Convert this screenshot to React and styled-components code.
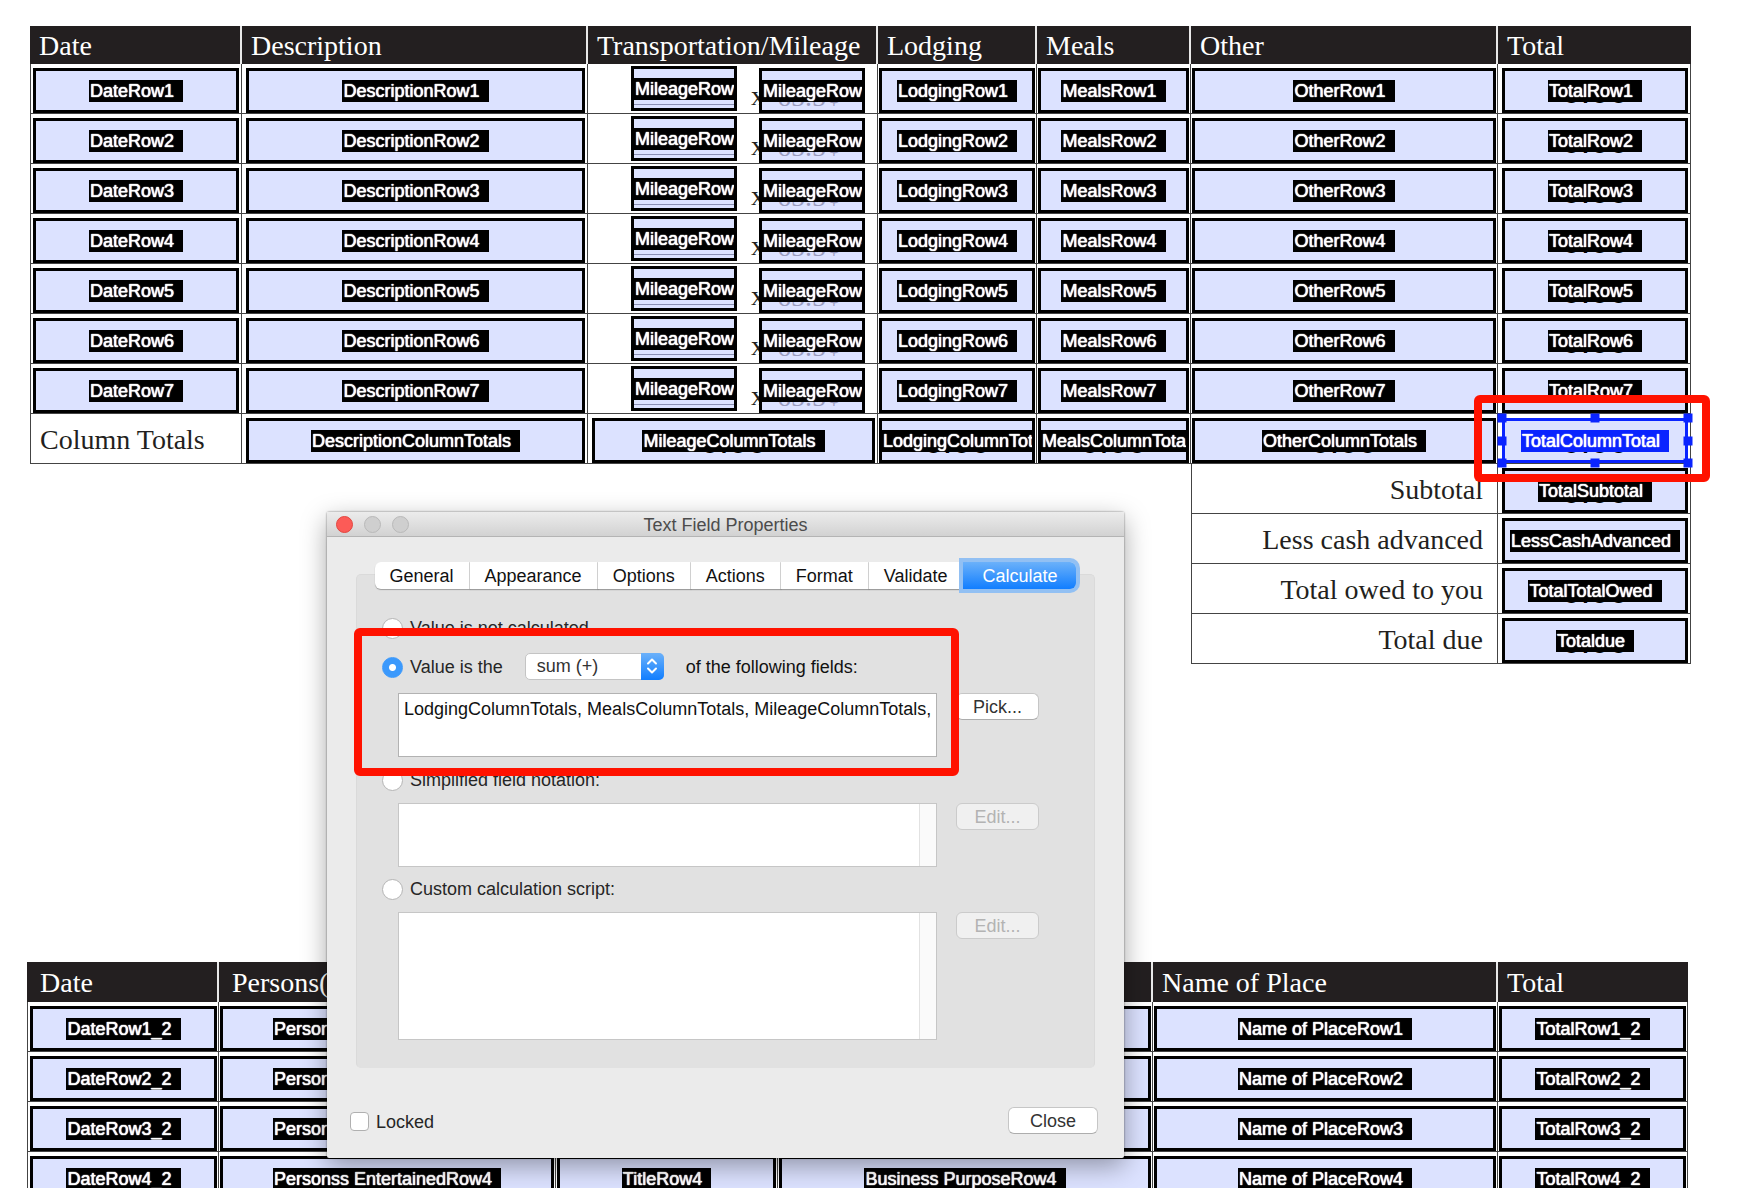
import React, { useState } from "react";
import styled, { createGlobalStyle, css } from "styled-components";

const expenseColumns = [
  { title: "Date", width: 212 },
  { title: "Description", width: 346 },
  { title: "Transportation/Mileage", width: 290 },
  { title: "Lodging", width: 159, tight: true },
  { title: "Meals", width: 154, tight: true },
  { title: "Other", width: 307, tight: true },
  { title: "Total", width: 193 },
];

const guestColumns = [
  { title: "Date", width: 192, indent: true },
  { title: "Persons(s) Entertained", width: 337, indent: true },
  { title: "Title", width: 222 },
  { title: "Business Purpose", width: 375 },
  { title: "Name of Place", width: 345 },
  { title: "Total", width: 190 },
];

const summaryRows = [
  { label: "Subtotal", field: "TotalSubtotal", value: "0.00" },
  { label: "Less cash advanced", field: "LessCashAdvanced" },
  { label: "Total owed to you", field: "TotalTotalOwed", value: "0.00" },
  { label: "Total due", field: "Totaldue", value: "0.00" },
];

const tabs = [
  "General",
  "Appearance",
  "Options",
  "Actions",
  "Format",
  "Validate",
  "Calculate",
];

const handles = [
  ["0%", "0%"],
  ["50%", "0%"],
  ["100%", "0%"],
  ["0%", "50%"],
  ["100%", "50%"],
  ["0%", "100%"],
  ["50%", "100%"],
  ["100%", "100%"],
];

function FormField({ name, value, rate, ruled, selected, onSelect }) {
  const active = selected === name;
  return (
    <FieldWrap>
      <Field
        type="button"
        $active={active}
        $ruled={ruled}
        onClick={() => onSelect(name)}
      >
        {value && <Value>{value}</Value>}
        {rate && <Rate>{rate}</Rate>}
        <FieldName $active={active}>{name}</FieldName>
      </Field>
      {active &&
        handles.map(([x, y]) => <Handle key={x + y} $x={x} $y={y} />)}
      {name === "TotalColumnTotal" && <FieldMark />}
    </FieldWrap>
  );
}

function Columns({ columns }) {
  const total = columns.reduce((sum, c) => sum + c.width, 0);
  return (
    <colgroup>
      {columns.map((c) => (
        <col key={c.title} style={{ width: `${(c.width / total) * 100}%` }} />
      ))}
    </colgroup>
  );
}

function ExpenseTable({ selected, onSelect }) {
  const pick = { selected, onSelect };
  return (
    <Table>
      <Columns columns={expenseColumns} />
      <thead>
        <tr>
          {expenseColumns.map((c) => (
            <Head key={c.title}>{c.title}</Head>
          ))}
        </tr>
      </thead>
      <tbody>
        {[1, 2, 3, 4, 5, 6, 7].map((n) => (
          <tr key={n}>
            {expenseColumns.map((c) =>
              c.title === "Transportation/Mileage" ? (
                <Cell key={c.title}>
                  <MileagePair>
                    <FormField name={`MileageRow${n}`} ruled {...pick} />
                    <Times>x</Times>
                    <FormField
                      name={`MileageRow${n}_2`}
                      rate="65.5¢"
                      {...pick}
                    />
                  </MileagePair>
                </Cell>
              ) : (
                <Cell key={c.title} $tight={c.tight}>
                  <FormField
                    name={`${c.title}Row${n}`}
                    value={c.title === "Total" ? "0.00" : null}
                    {...pick}
                  />
                </Cell>
              )
            )}
          </tr>
        ))}
        <tr>
          <LabelCell scope="row">Column Totals</LabelCell>
          <Cell>
            <FormField name="DescriptionColumnTotals" {...pick} />
          </Cell>
          <Cell>
            <FormField name="MileageColumnTotals" value="0.00" {...pick} />
          </Cell>
          <Cell $tight>
            <FormField name="LodgingColumnTotals" value="0.00" {...pick} />
          </Cell>
          <Cell $tight>
            <FormField name="MealsColumnTotals" value="0.00" {...pick} />
          </Cell>
          <Cell $tight>
            <FormField name="OtherColumnTotals" value="0.00" {...pick} />
          </Cell>
          <Cell>
            <FormField name="TotalColumnTotal" value="0.00" {...pick} />
          </Cell>
        </tr>
        {summaryRows.map((row) => (
          <tr key={row.field}>
            <Spacer colSpan="5" />
            <LabelCell scope="row" $right>
              {row.label}
            </LabelCell>
            <Cell>
              <FormField name={row.field} value={row.value} {...pick} />
            </Cell>
          </tr>
        ))}
      </tbody>
    </Table>
  );
}

function GuestTable({ selected, onSelect }) {
  const pick = { selected, onSelect };
  return (
    <Table>
      <Columns columns={guestColumns} />
      <thead>
        <tr>
          {guestColumns.map((c) => (
            <Head key={c.title} $tall $indent={c.indent}>
              {c.title}
            </Head>
          ))}
        </tr>
      </thead>
      <tbody>
        {[1, 2, 3, 4].map((n) => (
          <tr key={n}>
            {[
              `DateRow${n}_2`,
              `Personss EntertainedRow${n}`,
              `TitleRow${n}`,
              `Business PurposeRow${n}`,
              `Name of PlaceRow${n}`,
              `TotalRow${n}_2`,
            ].map((name) => (
              <Cell key={name} $tight>
                <FormField name={name} {...pick} />
              </Cell>
            ))}
          </tr>
        ))}
      </tbody>
    </Table>
  );
}

function PropertiesDialog() {
  const [tab, setTab] = useState("Calculate");
  const [mode, setMode] = useState("sum");
  const radio = (value) => ({
    type: "radio",
    name: "mode",
    checked: mode === value,
    onChange: () => setMode(value),
  });

  return (
    <Dialog role="dialog" aria-labelledby="dialog-title">
      <TitleBar>
        <Lights>
          <Light aria-label="Close window" $red />
          <Light aria-label="Minimize" disabled />
          <Light aria-label="Zoom" disabled />
        </Lights>
        <Title id="dialog-title">Text Field Properties</Title>
      </TitleBar>
      <Body>
        <TabBar role="tablist">
          {tabs.map((name) => (
            <Tab
              key={name}
              type="button"
              role="tab"
              aria-selected={tab === name}
              $active={tab === name}
              onClick={() => setTab(name)}
            >
              {name}
            </Tab>
          ))}
        </TabBar>
        <Panel>
          <OptionRow>
            <Option>
              <Radio {...radio("none")} />
              Value is not calculated
            </Option>
          </OptionRow>
          <SumGroup>
            <SumRow>
              <Option>
                <Radio {...radio("sum")} />
                Value is the
              </Option>
              <SelectWrap>
                <Select aria-label="Operation" defaultValue="sum">
                  <option value="sum">sum (+)</option>
                  <option value="product">product (x)</option>
                  <option value="average">average</option>
                </Select>
                <SelectCap>
                  <svg width="12" height="18" viewBox="0 0 12 18">
                    <path
                      d="M2 6.5 6 2.5l4 4M2 11.5l4 4 4-4"
                      fill="none"
                      stroke="#fff"
                      strokeWidth="2"
                      strokeLinecap="round"
                      strokeLinejoin="round"
                    />
                  </svg>
                </SelectCap>
              </SelectWrap>
              <Suffix>of the following fields:</Suffix>
            </SumRow>
            <Entry>
              <TextArea
                aria-label="Fields"
                wrap="off"
                $dark
                defaultValue="LodgingColumnTotals, MealsColumnTotals, MileageColumnTotals, OtherColumnTotals"
              />
              <PushButton type="button">Pick...</PushButton>
            </Entry>
            <GroupMark />
          </SumGroup>
          <OptionRow>
            <Option>
              <Radio {...radio("notation")} />
              Simplified field notation:
            </Option>
          </OptionRow>
          <Entry>
            <TextArea aria-label="Simplified field notation" $gutter readOnly />
            <PushButton type="button" disabled>
              Edit...
            </PushButton>
          </Entry>
          <OptionRow>
            <Option>
              <Radio {...radio("script")} />
              Custom calculation script:
            </Option>
          </OptionRow>
          <Entry>
            <TextArea
              aria-label="Custom calculation script"
              $gutter
              $tall
              readOnly
            />
            <PushButton type="button" disabled>
              Edit...
            </PushButton>
          </Entry>
        </Panel>
        <Footer>
          <Option>
            <Checkbox type="checkbox" />
            Locked
          </Option>
          <PushButton type="button" $wide>
            Close
          </PushButton>
        </Footer>
      </Body>
    </Dialog>
  );
}

export default function App() {
  const [selected, setSelected] = useState("TotalColumnTotal");
  return (
    <Page>
      <GlobalStyle />
      <ExpenseSection>
        <ExpenseTable selected={selected} onSelect={setSelected} />
      </ExpenseSection>
      <GuestSection>
        <GuestTable selected={selected} onSelect={setSelected} />
      </GuestSection>
      <PropertiesDialog />
    </Page>
  );
}

const sans = `"Liberation Sans", Arial, sans-serif`;
const serif = `"Liberation Serif", "Times New Roman", serif`;

const GlobalStyle = createGlobalStyle`
  * {
    box-sizing: border-box;
  }
  body {
    margin: 0;
    background: #fff;
    font-family: ${sans};
    font-size: 18px;
  }
  button, select, textarea, input {
    font: inherit;
    margin: 0;
  }
`;

const Page = styled.main`
  position: relative;
  height: 100vh;
  overflow: hidden;
`;

const ExpenseSection = styled.section`
  padding: 26px 59px 0 30px;
`;

const GuestSection = styled.section`
  padding: 298px 62px 0 27px;
`;

const Table = styled.table`
  width: 100%;
  table-layout: fixed;
  border-collapse: separate;
  border-spacing: 0;
`;

const Head = styled.th`
  height: ${({ $tall }) => ($tall ? "40px" : "38px")};
  padding: 2px 0 0 ${({ $indent }) => ($indent ? "13px" : "9px")};
  border-right: 2px solid #e9e9e9;
  background: #231f20;
  color: #fff;
  font: 400 28px/34px ${serif};
  text-align: left;
  white-space: nowrap;
  overflow: hidden;
  &:last-child {
    border-right-color: #231f20;
  }
`;

const Cell = styled.td`
  height: 50px;
  padding: ${({ $tight }) => ($tight ? "4px 1px 0 1px" : "4px 2px 0 4px")};
  border-right: 1px solid #444;
  border-bottom: 1px solid #444;
  &:first-child {
    border-left: 1px solid #444;
    padding-left: 2px;
  }
`;

const LabelCell = styled.th`
  height: 50px;
  padding: 2px 14px 0 9px;
  border: solid #444;
  border-width: 0 1px 1px;
  color: #231f20;
  font: 400 28px/34px ${serif};
  text-align: ${({ $right }) => ($right ? "right" : "left")};
  white-space: nowrap;
`;

const Spacer = styled.td`
  padding: 0;
`;

const FieldWrap = styled.div`
  position: relative;
  width: 100%;
`;

const Field = styled.button`
  position: relative;
  display: flex;
  align-items: center;
  justify-content: safe center;
  width: 100%;
  height: 45px;
  padding: 0;
  border: 3px solid ${({ $active }) => ($active ? "#0a24ff" : "#000")};
  border-radius: 0;
  background: #dce2ff;
  overflow: hidden;
  ${({ $ruled }) =>
    $ruled &&
    css`
      &::before {
        content: "";
        position: absolute;
        left: 0;
        right: 0;
        bottom: 3px;
        height: 1px;
        background: #8b90b4;
      }
    `}
`;

const FieldName = styled.span`
  position: relative;
  flex: none;
  height: 22px;
  padding: 0 9px 0 1px;
  background: ${({ $active }) => ($active ? "#0a24ff" : "#000")};
  color: #fff;
  font-size: 18px;
  line-height: 22px;
  text-shadow: 0 0 1px #fff, 0 0 1px #fff;
  white-space: nowrap;
`;

const Value = styled.span`
  position: absolute;
  inset: 0;
  color: #000;
  font-size: 34px;
  line-height: 41px;
  text-align: center;
`;

const Rate = styled.span`
  position: absolute;
  left: 15px;
  bottom: -1px;
  color: #9a9dbf;
  font: 28px/28px ${serif};
`;

const MileagePair = styled.div`
  display: flex;
  justify-content: flex-end;
  height: 45px;
  padding-right: 10px;
  & > ${FieldWrap} {
    width: 106px;
  }
  & > ${FieldWrap}:first-child {
    margin-top: -2px;
  }
`;

const Times = styled.span`
  width: 22px;
  height: 45px;
  padding-left: 14px;
  color: #231f20;
  font: 28px/56px ${serif};
`;

const Handle = styled.span`
  position: absolute;
  left: ${({ $x }) => $x};
  top: ${({ $y }) => $y};
  width: 9px;
  height: 9px;
  background: #0a24ff;
  transform: translate(-50%, -50%);
`;

const mark = css`
  position: absolute;
  z-index: 2;
  border: 8px solid #ff1200;
  border-radius: 6px;
  pointer-events: none;
`;

const FieldMark = styled.div`
  ${mark}
  inset: -23px -22px -19px -28px;
`;

const GroupMark = styled.div`
  ${mark}
  inset: -24px 135px -19px -3px;
`;

const Dialog = styled.section`
  position: absolute;
  top: 512px;
  left: 327px;
  z-index: 3;
  width: 797px;
  border-radius: 2px;
  background: #ebebeb;
  box-shadow: 0 0 2px rgba(0, 0, 0, 0.6), 0 8px 26px rgba(0, 0, 0, 0.35);
`;

const TitleBar = styled.header`
  position: relative;
  display: flex;
  align-items: center;
  justify-content: center;
  height: 25px;
  border-bottom: 1px solid #b4b4b4;
  background: linear-gradient(#ececec, #d2d2d2);
`;

const Title = styled.h1`
  margin: 0;
  padding-top: 2px;
  color: #4c4c4c;
  font-size: 18px;
  font-weight: 400;
  line-height: 24px;
`;

const Lights = styled.div`
  position: absolute;
  left: 9px;
  display: flex;
  gap: 11px;
`;

const Light = styled.button`
  width: 17px;
  height: 17px;
  padding: 0;
  border: 1px solid ${({ $red }) => ($red ? "#e2463f" : "#b9b9b9")};
  border-radius: 50%;
  background: ${({ $red }) => ($red ? "#fc5b57" : "#cfcfcf")};
`;

const Body = styled.div`
  padding: 25px 29px 24px;
`;

const TabBar = styled.div`
  position: relative;
  z-index: 1;
  display: flex;
  justify-content: center;
  margin-bottom: -15px;
`;

const Tab = styled.button`
  height: 27px;
  padding: 1px 15px 0;
  border: 0;
  border-right: 1px solid #dcdcdc;
  background: #fff;
  color: #111;
  line-height: 26px;
  box-shadow: 0 1px 1px rgba(0, 0, 0, 0.3);
  &:first-child {
    border-radius: 6px 0 0 6px;
  }
  ${({ $active }) =>
    $active &&
    css`
      padding: 1px 19px 0;
      border: 0;
      border-radius: 0 6px 6px 0;
      background: linear-gradient(#6bb1fa, #117eff);
      color: #fff;
      box-shadow: 0 0 0 4px #92c0f3;
    `}
`;

const Panel = styled.div`
  padding: 41px 55px 27px 25px;
  border: 1px solid #dadada;
  border-bottom-color: #e1e1e1;
  border-radius: 5px;
  background: #e1e1e1;
`;

const OptionRow = styled.div`
  display: flex;
  align-items: center;
  height: 22px;
`;

const Option = styled.label`
  display: flex;
  align-items: center;
  gap: 7px;
  padding-top: 2px;
  color: #262626;
  line-height: 22px;
`;

const Radio = styled.input`
  appearance: none;
  width: 21px;
  height: 21px;
  border: 1px solid #b5b5b5;
  border-radius: 50%;
  background: #fff;
  &:checked {
    border-color: #3b99fc;
    background: radial-gradient(circle, #fff 3px, #3b99fc 4px);
  }
`;

const Checkbox = styled.input`
  appearance: none;
  width: 19px;
  height: 19px;
  border: 1px solid #b0b0b0;
  border-radius: 4px;
  background: #fff;
  &:checked {
    background: #3b99fc;
  }
`;

const SumGroup = styled.div`
  position: relative;
  margin: 14px -55px 11px -25px;
  padding: 0 55px 0 25px;
`;

const SumRow = styled.div`
  display: flex;
  align-items: center;
  height: 28px;
  gap: 22px;
  color: #111;
`;

const Suffix = styled.span`
  padding-top: 2px;
  line-height: 22px;
`;

const SelectWrap = styled.div`
  position: relative;
  width: 139px;
  height: 27px;
`;

const Select = styled.select`
  appearance: none;
  width: 100%;
  height: 27px;
  padding: 0 28px 0 11px;
  border: 1px solid #c4c4c4;
  border-radius: 5px;
  background: #fff;
  color: #333;
`;

const SelectCap = styled.span`
  position: absolute;
  top: 0;
  right: 0;
  display: grid;
  place-items: center;
  width: 23px;
  height: 27px;
  border-radius: 0 5px 5px 0;
  background: linear-gradient(#6bb1fa, #117eff);
  pointer-events: none;
`;

const Entry = styled.div`
  display: flex;
  align-items: flex-start;
  gap: 19px;
  margin: 13px 0 10px 16px;
  &:last-child {
    margin-bottom: 0;
  }
`;

const TextArea = styled.textarea`
  display: block;
  flex: 1;
  min-width: 0;
  height: ${({ $tall }) => ($tall ? "128px" : "64px")};
  padding: 4px 5px;
  border: 1px solid ${({ $dark }) => ($dark ? "#b2b2b2" : "#c6c6c6")};
  border-radius: 0;
  outline: 0;
  background: ${({ $gutter }) =>
    $gutter
      ? "linear-gradient(to left, #fafafa 16px, #e2e2e2 16px, #e2e2e2 17px, #fff 17px)"
      : "#fff"};
  color: #111;
  line-height: 22px;
  resize: none;
  overflow: hidden;
`;

const PushButton = styled.button`
  width: ${({ $wide }) => ($wide ? "90px" : "83px")};
  height: 27px;
  padding: 0;
  border: 1px solid #c6c6c6;
  border-bottom-color: #adadad;
  border-radius: 6px;
  background: #fff;
  color: #333;
  line-height: 24px;
  &:disabled {
    border-color: #cbcbcb;
    background: #f0f0f0;
    color: #b3b3b3;
  }
`;

const Footer = styled.footer`
  display: flex;
  align-items: center;
  justify-content: space-between;
  margin: 39px -3px 0 -6px;
`;
